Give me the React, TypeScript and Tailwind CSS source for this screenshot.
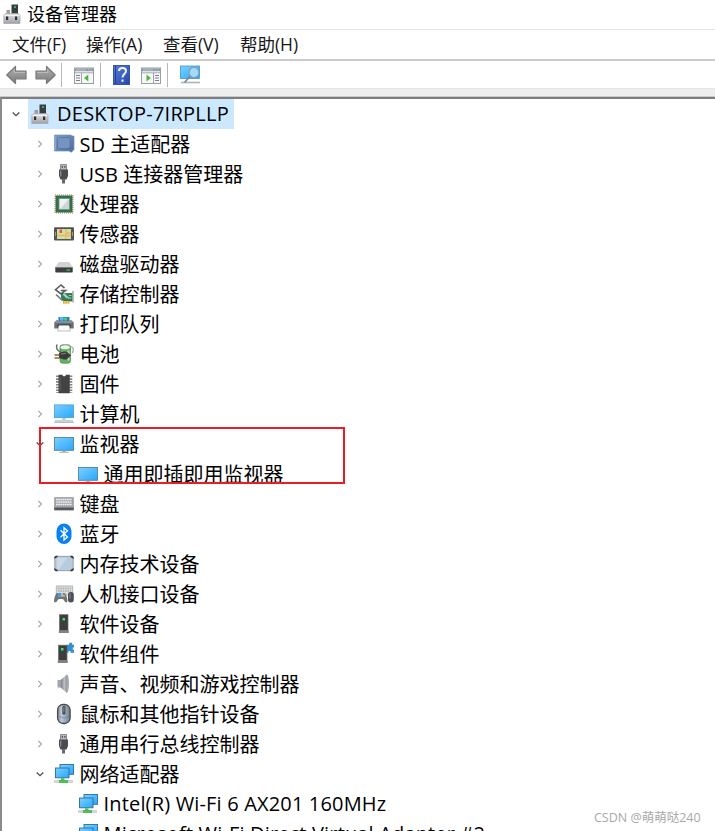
import React from 'react';

const Svg: React.FC<{ children: React.ReactNode; w?: number; h?: number }> = ({ children, w = 20, h = 20 }) => (
  <svg width={w} height={h} viewBox={`0 0 ${w} ${h}`} fill="none" className="block shrink-0 overflow-visible">
    {children}
  </svg>
);

const Gradients = () => (
  <svg width="0" height="0" className="absolute">
    <defs>
      <linearGradient id="screen" x1="0" y1="0" x2="1" y2="1">
        <stop offset="0" stopColor="#7dd0ff" />
        <stop offset="0.5" stopColor="#52bbff" />
        <stop offset="1" stopColor="#2aa7f8" />
      </linearGradient>
      <linearGradient id="metal" x1="0" y1="0" x2="0" y2="1">
        <stop offset="0" stopColor="#e4e4e6" />
        <stop offset="1" stopColor="#9fa1a5" />
      </linearGradient>
      <linearGradient id="arrow" x1="0" y1="0" x2="0" y2="1">
        <stop offset="0" stopColor="#b0b0b0" />
        <stop offset="1" stopColor="#7c7c7c" />
      </linearGradient>
      <linearGradient id="slate" x1="0" y1="0" x2="1" y2="1">
        <stop offset="0" stopColor="#7f9cc6" />
        <stop offset="1" stopColor="#4d6c9c" />
      </linearGradient>
      <linearGradient id="book" x1="0" y1="0" x2="1" y2="1">
        <stop offset="0" stopColor="#5b7fdc" />
        <stop offset="1" stopColor="#2245a8" />
      </linearGradient>
      <linearGradient id="cone" x1="0" y1="0" x2="1" y2="0">
        <stop offset="0" stopColor="#72777d" />
        <stop offset="0.6" stopColor="#bcc2c8" />
        <stop offset="1" stopColor="#858b91" />
      </linearGradient>
      <linearGradient id="mouse" x1="0" y1="0" x2="1" y2="0">
        <stop offset="0" stopColor="#7e8997" />
        <stop offset="0.3" stopColor="#bdc9d6" />
        <stop offset="1" stopColor="#71808f" />
      </linearGradient>
    </defs>
  </svg>
);

const DeviceIcon = () => (
  <Svg w={18} h={20}>
    <rect x="8.500" y="0.500" width="6.500" height="10" fill="#3a3d3f" />
    <rect x="11" y="2" width="2" height="2" fill="#35b257" />
    <path d="M3.500 6h3.500v4H3.500z" fill="#9a9da0" />
    <path d="M2.500 9.500h13l1.500 2v8H0.800v-8z" fill="url(#metal)" stroke="#a5a5a8" strokeWidth="0.700" />
    <path d="M1.500 11.500h15" stroke="#f4f4f4" />
    <rect x="3" y="12.500" width="2.200" height="3.500" fill="#2e3033" />
    <rect x="12" y="12.500" width="2.200" height="3.500" fill="#2e3033" />
  </Svg>
);

const SdIcon = () => (
  <Svg>
    <path d="M0.500 1h16.500l1 1h2v14h-1l-1 2h-2v-1H0.500z" fill="url(#slate)" stroke="#7591ba" strokeWidth="0.700" />
    <path d="M4.500 3.500h10l1.500 1.500v7.500l-2 2H5L3.500 13V4.500z" fill="#7594c2" stroke="#54739f" strokeWidth="0.800" />
    <path d="M1.500 2v14" stroke="#8ea8cd" />
  </Svg>
);

const UsbIcon = () => (
  <Svg>
    <path d="M6.500 0.500h6v6h-6z" fill="#b9bcbf" stroke="#77797c" strokeWidth="0.800" />
    <path d="M7.700 2H9v1.800H7.700zM10.200 2h1.300v1.800h-1.300z" fill="#4d4f52" />
    <path d="M5 5.500h9V12l-1.500 3.500h-6L5 12z" fill="#4a4c4f" />
    <path d="M6.700 6.500v6" stroke="#8c8f93" strokeWidth="1.200" />
    <path d="M8 15h3v4.500H8z" fill="#66696c" />
  </Svg>
);

const CpuIcon = () => (
  <Svg>
    <rect x="1" y="1" width="18" height="18" stroke="#d0ad72" strokeWidth="1.600" strokeDasharray="1 1" />
    <rect x="1.500" y="1.500" width="17" height="17" fill="#316e52" />
    <rect x="5" y="4.500" width="10.500" height="11" fill="#eef1f0" stroke="#6c9280" strokeWidth="0.800" />
    <path d="M15 5v10H6z" fill="#ced4d2" />
  </Svg>
);

const SensorIcon = () => (
  <Svg>
    <rect x="0" y="3.300" width="20" height="13.200" rx="1" fill="#555450" />
    <rect x="3" y="5" width="14" height="10" fill="#cddfa3" />
    <path d="M3 11.500h14M12 5v10M12 9h5" stroke="#ebb85d" strokeWidth="1.300" />
    <path d="M5.500 5.500H8V9H5.500z" fill="#e95454" />
    <path d="M1.500 8v4M18.500 8v4" stroke="#98988f" />
  </Svg>
);

const DiskIcon = () => (
  <Svg>
    <path d="M5 8.500h10l3.500 5H1.500z" fill="#d0d2d3" stroke="#c2c4c5" strokeWidth="0.600" />
    <rect x="1.300" y="13" width="17.400" height="5.500" rx="0.800" fill="#3b3d40" />
    <path d="M2 13.500h16" stroke="#85888a" strokeWidth="0.800" />
    <rect x="12.500" y="15.500" width="3.500" height="1.200" fill="#32d94a" />
  </Svg>
);

const StorageIcon = () => (
  <Svg>
    <path d="M10.500 4.200L7 1 1.500 5.700 7 10l4.500-3.500H6.800" stroke="#5b5d60" strokeWidth="1.600" />
    <path d="M2 10.500l6.500 6" stroke="#73767a" strokeWidth="1.700" />
    <path d="M7.500 9.500h10.500V17H9.500l-2-3z" fill="#2c825c" stroke="#1b6743" strokeWidth="0.700" />
    <path d="M9 10l4 4M10 9.500l5 5" stroke="#b3ccbf" strokeWidth="1.200" />
    <path d="M15 11.500h2.500M15 14h2.500" stroke="#9bd0b0" />
    <path d="M19 7v11.500" stroke="#8c8f92" strokeWidth="1.200" />
    <path d="M9 17h6.500v2.700H9z" fill="#f3ae2c" />
    <path d="M11 17v2.700M13.300 17v2.700" stroke="#fff1c4" strokeWidth="0.500" />
  </Svg>
);

const PrinterIcon = () => (
  <Svg>
    <path d="M4.500 3h11v4h-11z" fill="#1c82cf" />
    <path d="M6 3h3.500v3.500H6z" fill="#55bdec" />
    <path d="M10 3.500h3v3h-3z" fill="#50c576" />
    <path d="M2.500 6.300h2V7h11v-.7h2l2.200 2.200v6H0.300v-6z" fill="#6a6e72" />
    <path d="M1.500 8h17" stroke="#a9acae" />
    <path d="M3.500 10.500h13v3h-13z" fill="#303336" />
    <path d="M5 11.500h10l1.500 5.500h-13z" fill="#fafafa" stroke="#b1b4b6" strokeWidth="0.800" />
  </Svg>
);

const BatteryIcon = () => (
  <Svg>
    <path d="M16 4c3-3 4 1 2.500 5" stroke="#8b8f8b" />
    <rect x="6" y="0.800" width="10.500" height="18.400" rx="2.500" fill="#5eb55b" stroke="#69856b" strokeWidth="0.800" />
    <ellipse cx="11.200" cy="3.300" rx="4.500" ry="2" fill="#f1f4f1" />
    <path d="M14.500 6.500v10" stroke="#b5e4a9" strokeWidth="1.700" />
    <path d="M3 0.500C1 6 5 7 8 9" stroke="#686c6e" strokeWidth="1.500" />
    <path d="M5 9l5-1.500h2.500l4.500 4-4.500 4H10l-5-1.500z" fill="#393b3d" />
    <path d="M7 10.200l5-1" stroke="#7f8588" />
    <path d="M0.500 11h5M0.500 14h5" stroke="#876a3a" strokeWidth="1.500" />
  </Svg>
);

const FirmwareIcon = () => (
  <Svg>
    <path d="M3.500 1.500v17.500M16.800 1.500v17.500" stroke="#828486" strokeWidth="3" strokeDasharray="1.600 1.200" />
    <path d="M4.500 0.700h4c0 2 3.300 2 3.300 0h4v18.600H4.500z" fill="#424345" />
    <path d="M6 3v14" stroke="#626466" />
  </Svg>
);

const ComputerIcon = () => (
  <Svg>
    <rect x="0.500" y="0.900" width="19" height="12.800" fill="url(#screen)" stroke="#4b9ecd" strokeWidth="0.800" />
    <path d="M8.500 14h3v2h-3z" fill="#b4c0c9" />
    <path d="M1.500 16h17l1.500 3H0z" fill="#b3bfc8" />
    <path d="M1.500 17h17" stroke="#dde4e9" />
  </Svg>
);

const MonitorIcon = () => (
  <Svg>
    <rect x="0.500" y="3.500" width="19" height="12.800" fill="url(#screen)" stroke="#54839f" strokeWidth="0.900" />
    <path d="M8.500 16.700h3v1h3v1h-9v-1h3z" fill="#9aabb7" />
  </Svg>
);

const KeyboardIcon = () => (
  <Svg>
    <path d="M0.500 3.500h19V16h-19z" fill="#a2a6ab" stroke="#8c9196" strokeWidth="0.600" />
    <path d="M2 5.500h16M2.500 8h15M2 10.500h16" stroke="#f1f2f3" strokeWidth="1.400" strokeDasharray="1.700 0.500" />
    <path d="M0.300 13.500h19.400v2.700H0.300z" fill="#55595f" />
  </Svg>
);

const BluetoothIcon = () => (
  <Svg>
    <rect x="2.500" y="-0.500" width="15" height="20.500" rx="7.500" fill="#0a80f5" />
    <path d="M6.500 6.300l7 6.700-3.500 3V3.700l3.500 3-7 6.600" stroke="#fff" strokeWidth="1.300" />
  </Svg>
);

const MemoryIcon = () => (
  <Svg>
    <rect x="0.800" y="2.300" width="18.400" height="14.400" rx="2" fill="#b7cbdc" stroke="#8f9ba5" strokeWidth="0.900" />
    <path d="M3 4h10L5 15H3z" fill="#c9d9e5" />
    <path d="M0.300 4.800V3.500q0-1.700 1.700-1.700h2L3 3.500zM16 1.800h2q1.700 0 1.700 1.700v1.500L17 3.500zM0.300 14v1.500q0 1.700 1.700 1.700h2l-1-1.700zM16 17.200h2q1.700 0 1.700-1.700V14L17 15.500z" fill="#3a3d40" />
  </Svg>
);

const HidIcon = () => (
  <Svg>
    <path d="M2.300 2h16.400v9H2.300z" fill="#dadcde" stroke="#a3a7ab" strokeWidth="0.800" />
    <path d="M4 4.500h13M4 7h13" stroke="#a9adb1" strokeWidth="1.300" strokeDasharray="1.500 0.900" />
    <path d="M3 9h7.500c2.500 2 4 9.500 2 9.500-2 0-2.500-3.500-4-3.500H5c-1 0-2 3.500-4 3.500S0.500 11 3 9z" fill="#70757a" />
    <path d="M4 9h5v3.500H4z" fill="#a6c5da" />
    <circle cx="5.500" cy="10.500" r="1.700" fill="#279de7" />
    <circle cx="9.700" cy="11.800" r="1.300" fill="#e4a94e" />
    <rect x="14" y="8" width="5.800" height="10.500" rx="2.700" fill="#4d5156" />
    <path d="M16 9.500v5" stroke="#989da2" strokeWidth="0.800" />
  </Svg>
);

const SoftwareIcon = () => (
  <Svg>
    <rect x="5.500" y="0.700" width="8.500" height="16" fill="#3d3e40" stroke="#696b6d" strokeWidth="0.700" />
    <rect x="4.800" y="16.500" width="10" height="2.500" fill="#818385" />
    <rect x="8.500" y="4" width="2.500" height="2.500" fill="#36ed4b" />
  </Svg>
);

const ComponentIcon = () => (
  <Svg>
    <path d="M12.500 0.800h2.700v-2h3v2H20v2.700h-1.200v2.200H20v3h-3.500V7h-2v1.700h-2z" fill="#338fd0" />
    <rect x="4.500" y="1.200" width="8.500" height="15.300" fill="#3d3e40" stroke="#696b6d" strokeWidth="0.700" />
    <rect x="3.800" y="16.500" width="10" height="2.500" fill="#818385" />
    <rect x="7" y="4" width="2.500" height="2.500" fill="#36ed4b" />
  </Svg>
);

const SpeakerIcon = () => (
  <Svg>
    <path d="M3.500 6h3v7.500h-3z" fill="#a1a5a9" />
    <path d="M6.500 6L13 0.500v18.500L6.500 13.500z" fill="url(#cone)" />
    <path d="M12.500 0.500q2.500 0 2.500 9t-2.500 9.500z" fill="#a6acb2" />
  </Svg>
);

const MouseIcon = () => (
  <Svg>
    <rect x="3.600" y="0.500" width="12.500" height="19" rx="5.500" fill="url(#mouse)" stroke="#46494d" strokeWidth="1.300" />
    <rect x="8.400" y="2" width="3" height="8.500" rx="1.200" fill="#45494e" />
    <path d="M9.900 3v5.500" stroke="#85898d" />
    <path d="M5 12.500q5 3 10 0" stroke="#707b87" strokeWidth="0.600" />
  </Svg>
);

const NetworkIcon = () => (
  <Svg>
    <rect x="6" y="0.500" width="13.500" height="9.800" fill="url(#screen)" stroke="#2c6e9c" strokeWidth="0.900" />
    <rect x="1.500" y="4" width="13.500" height="9.800" fill="url(#screen)" stroke="#2c6e9c" strokeWidth="0.900" />
    <path d="M0 16h19v3H0z" fill="#d4d6d4" />
    <path d="M7 14.300h3.500V16H14v3H5v-3h2z" fill="#50be55" />
  </Svg>
);

const ArrowIcon: React.FC<{ flip?: boolean }> = ({ flip }) => (
  <svg width="21" height="20" viewBox="0 0 21 20" className={flip ? 'block -scale-x-100' : 'block'}>
    <path d="M9.500 1.500v4.700h10.500v7.600H9.500v4.700L0.800 10z" fill="url(#arrow)" stroke="#777" strokeWidth="1.200" strokeLinejoin="round" />
    <path d="M8.300 4v3.400h10.500" stroke="#cacaca" strokeWidth="0.700" fill="none" />
  </svg>
);

const PanelIcon: React.FC<{ right?: boolean }> = ({ right }) => (
  <Svg>
    <rect x="0.500" y="3" width="19" height="15.500" fill="#f7f7f7" stroke="#9a9fa4" />
    <path d="M1 3.500h18v2.700H1z" fill="#8793a1" />
    <path d="M2 5h10.500M14 5h1.300M16.500 5h1.300" stroke="#d3dae1" strokeWidth="0.800" />
    <path d="M1 7.700h18" stroke="#babfc5" strokeWidth="1.400" />
    {right ? (
      <>
        <path d="M5.500 9.500v7L9.800 13z" fill="#4bb53d" />
        <path d="M12.500 8v10" stroke="#a0a5aa" />
        <path d="M14 10.500h4M14 13h4M14 15.500h4" stroke="#758290" />
      </>
    ) : (
      <>
        <path d="M2 10.500h4M2 13h4M2 15.500h4" stroke="#758290" />
        <path d="M7.500 8v10" stroke="#a0a5aa" />
        <path d="M14.300 9.500v7L10 13z" fill="#4bb53d" />
      </>
    )}
  </Svg>
);

const HelpIcon = () => (
  <Svg w={17}>
    <rect x="0.500" y="0.500" width="16" height="19" fill="url(#book)" stroke="#3b55a4" />
    <path d="M2.500 1v18" stroke="#203e94" />
    <path d="M6 6c0-4 7-4 7 0 0 3-3.500 3-3.500 6.500M9.500 14.500v2.300" stroke="#f0f4ff" strokeWidth="2" />
  </Svg>
);

const ScanIcon = () => (
  <Svg>
    <rect x="0.500" y="1" width="19" height="12.500" fill="url(#screen)" stroke="#4896c6" strokeWidth="0.800" />
    <path d="M1 17.500h19" stroke="#a9b5bd" strokeWidth="1.600" />
    <path d="M10 11.500L4.500 17.500" stroke="#788791" strokeWidth="1.700" />
    <circle cx="14" cy="7.500" r="5" fill="#a2dbf9" stroke="#8298a7" strokeWidth="1.100" />
  </Svg>
);

const Chevron: React.FC<{ open?: boolean }> = ({ open }) => (
  <svg width="10" height="10" viewBox="0 0 10 10" fill="none" className="block shrink-0">
    {open ? (
      <path d="M1.700 3.500L5 6.700l3.300-3.200" stroke="#505050" strokeWidth="1.300" />
    ) : (
      <path d="M3.300 1.800L6.500 5 3.300 8.200" stroke="#a6a6a6" strokeWidth="1.200" />
    )}
  </svg>
);

interface TreeItem {
  label: string;
  icon: React.FC;
  open?: boolean;
  child?: boolean;
  tracking?: string;
}

const items: TreeItem[] = [
  { label: 'SD 主适配器', icon: SdIcon },
  { label: 'USB 连接器管理器', icon: UsbIcon },
  { label: '处理器', icon: CpuIcon },
  { label: '传感器', icon: SensorIcon },
  { label: '磁盘驱动器', icon: DiskIcon },
  { label: '存储控制器', icon: StorageIcon },
  { label: '打印队列', icon: PrinterIcon },
  { label: '电池', icon: BatteryIcon },
  { label: '固件', icon: FirmwareIcon },
  { label: '计算机', icon: ComputerIcon },
  { label: '监视器', icon: MonitorIcon, open: true },
  { label: '通用即插即用监视器', icon: MonitorIcon, child: true },
  { label: '键盘', icon: KeyboardIcon },
  { label: '蓝牙', icon: BluetoothIcon },
  { label: '内存技术设备', icon: MemoryIcon },
  { label: '人机接口设备', icon: HidIcon },
  { label: '软件设备', icon: SoftwareIcon },
  { label: '软件组件', icon: ComponentIcon },
  { label: '声音、视频和游戏控制器', icon: SpeakerIcon },
  { label: '鼠标和其他指针设备', icon: MouseIcon },
  { label: '通用串行总线控制器', icon: UsbIcon },
  { label: '网络适配器', icon: NetworkIcon, open: true },
  { label: 'Intel(R) Wi-Fi 6 AX201 160MHz', icon: NetworkIcon, child: true, tracking: 'tracking-[0.17px]' },
  { label: 'Microsoft Wi-Fi Direct Virtual Adapter #2', icon: NetworkIcon, child: true, tracking: 'tracking-[0.16px]' },
];

const menus = [
  { name: '文件', hotkey: '(F)', width: 'w-[74px]' },
  { name: '操作', hotkey: '(A)', width: 'w-[77px]' },
  { name: '查看', hotkey: '(V)', width: 'w-[77px]' },
  { name: '帮助', hotkey: '(H)', width: 'w-[74px]' },
];

const TreeRow: React.FC<{ item: TreeItem }> = ({ item }) => {
  const Icon = item.icon;
  return (
    <div className={`flex h-[30px] shrink-0 items-center ${item.child ? 'pl-[75.5px]' : 'pl-[33px]'}`}>
      {!item.child && <Chevron open={item.open} />}
      <div className={item.child ? '' : 'ml-[8.5px]'}>
        <Icon />
      </div>
      <span className={`ml-1.5 whitespace-nowrap text-[20px] ${item.tracking ? 'leading-[30px]' : 'pt-0.5 leading-7'} ${item.tracking || ''}`}>
        {item.label}
      </span>
    </div>
  );
};

export default function App() {
  return (
    <div className="relative flex h-[831px] w-[715px] flex-col overflow-hidden bg-white font-['Open_Sans','Noto_Sans_CJK_SC',sans-serif] text-black">
      <Gradients />
      <div className="flex h-[29px] shrink-0 items-center pb-0.5 pl-[3px]">
        <DeviceIcon />
        <span className="ml-1.5 text-[18px] leading-[26px]">设备管理器</span>
      </div>
      <div className="flex h-8 shrink-0 items-center border-t border-b-2 border-t-[#e4e4e4] border-b-[#cbcbcb] pl-3 text-[17.5px] text-[#181818]">
        {menus.map((menu) => (
          <div key={menu.name} className={`whitespace-nowrap ${menu.width}`}>
            {menu.name}
            <span className="tracking-[-0.05px]">{menu.hotkey}</span>
          </div>
        ))}
      </div>
      <div className="flex h-[27px] shrink-0 items-center pt-px pl-1.5">
        <ArrowIcon />
        <div className="ml-2">
          <ArrowIcon flip />
        </div>
        <div className="ml-[5px] h-6 w-px bg-[#b7b7b7]" />
        <div className="ml-3">
          <PanelIcon />
        </div>
        <div className="ml-1.5 h-6 w-px bg-[#b7b7b7]" />
        <div className="ml-3">
          <HelpIcon />
        </div>
        <div className="ml-[11px]">
          <PanelIcon right />
        </div>
        <div className="ml-1.5 h-6 w-px bg-[#b7b7b7]" />
        <div className="ml-3">
          <ScanIcon />
        </div>
      </div>
      <div className="h-[9px] shrink-0 border-t border-b border-t-[#e3e3e3] border-b-[#c9c9c9] bg-[#eeeeee]" />
      <div className="flex min-h-0 flex-1 flex-col overflow-hidden border-l-2 border-t-2 border-l-[#8b8b8b] border-t-[#7d7d7d]">
        <div className="flex h-[30px] shrink-0 items-center pl-[9px]">
          <Chevron open />
          <div className="ml-[7px] flex h-[30px] w-[206px] items-center bg-[#cce8ff] pl-[3px]">
            <DeviceIcon />
            <span className="ml-2 whitespace-nowrap text-[20px] leading-[30px] tracking-[0.25px]">DESKTOP-7IRPLLP</span>
          </div>
        </div>
        {items.map((item) => (
          <TreeRow key={item.label} item={item} />
        ))}
      </div>
      <div className="absolute left-[39px] top-[427px] h-[57px] w-[306px] border-2 border-[#ed1c24] shadow-[0_3px_0_#fff]" />
      <div className="absolute left-[594px] top-[808px] whitespace-nowrap text-[12.5px] leading-5 text-[#a8a8a8]">CSDN @萌萌哒240</div>
    </div>
  );
}
